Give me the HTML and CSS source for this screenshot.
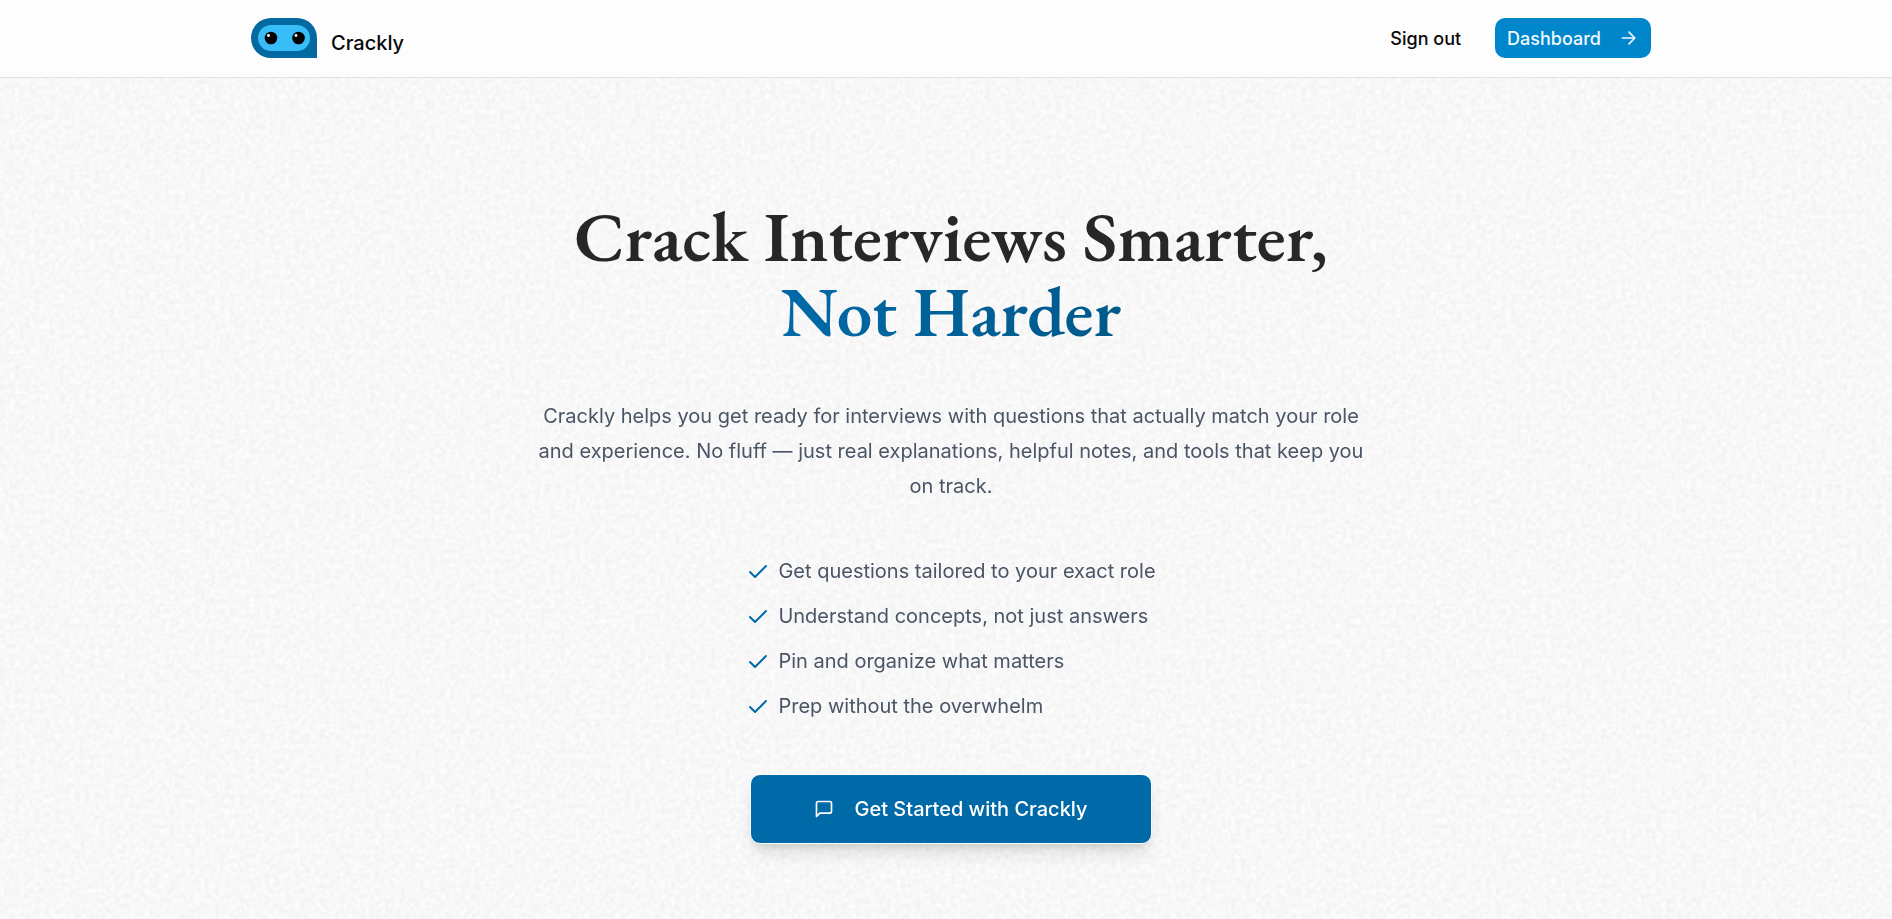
FILE: index.html
```html
<!DOCTYPE html>
<html lang="en">
<head>
<meta charset="utf-8">
<meta name="viewport" content="width=device-width, initial-scale=1">
<title>Crackly</title>
<link rel="stylesheet" href="styles.css">
</head>
<body>
<svg class="paper" aria-hidden="true">
  <filter id="grain" x="0" y="0" width="100%" height="100%" color-interpolation-filters="sRGB">
    <feTurbulence type="fractalNoise" baseFrequency="0.2" numOctaves="3" seed="4" stitchTiles="stitch"/>
    <feColorMatrix type="matrix" values="0.07 0 0 0 0.936  0.07 0 0 0 0.936  0.07 0 0 0 0.936  0 0 0 0 1"/>
  </filter>
  <rect width="100%" height="100%" filter="url(#grain)"/>
</svg>
<header class="header">
  <div class="bar">
    <a class="brand" href="#">
      <svg class="logo" viewBox="0 0 66 40" aria-hidden="true">
        <path d="M20 0h26a20 20 0 0 1 20 20v20H20a20 20 0 0 1 0-40z" fill="#0369a1"/>
        <rect x="7" y="7" width="52" height="26" rx="13" fill="#38bdf8"/>
        <circle cx="20" cy="20" r="6.3"/><circle cx="47.5" cy="20" r="6.3"/>
        <circle cx="17.5" cy="17.5" r="1.4" fill="#fff"/><circle cx="45" cy="17.5" r="1.4" fill="#fff"/>
      </svg>
      <span class="name">Crackly</span>
    </a>
    <nav class="nav">
      <button class="signout" type="button">Sign out</button>
      <a class="dashboard" href="#">Dashboard
        <svg class="icon" viewBox="0 0 24 24" aria-hidden="true"><path d="M4 12h15M12 5l7 7-7 7"/></svg>
      </a>
    </nav>
  </div>
</header>
<main class="hero">
  <h1 class="title">Crack Interviews Smarter,<br><span class="accent">Not Harder</span></h1>
  <p class="lead">Crackly helps you get ready for interviews with questions that actually match your role and experience. No fluff — just real explanations, helpful notes, and tools that keep you on track.</p>
  <ul class="features">
    <li class="feature"><svg class="check" viewBox="0 0 24 24" aria-hidden="true"><path d="M20 6 9 17l-5-5"/></svg>Get questions tailored to your exact role</li>
    <li class="feature"><svg class="check" viewBox="0 0 24 24" aria-hidden="true"><path d="M20 6 9 17l-5-5"/></svg>Understand concepts, not just answers</li>
    <li class="feature"><svg class="check" viewBox="0 0 24 24" aria-hidden="true"><path d="M20 6 9 17l-5-5"/></svg>Pin and organize what matters</li>
    <li class="feature"><svg class="check" viewBox="0 0 24 24" aria-hidden="true"><path d="M20 6 9 17l-5-5"/></svg>Prep without the overwhelm</li>
  </ul>
  <a class="cta" href="#">
    <svg class="icon" viewBox="0 0 24 24" aria-hidden="true"><path d="M21 15a2 2 0 0 1-2 2H7l-4 4V5a2 2 0 0 1 2-2h14a2 2 0 0 1 2 2z"/></svg>
    Get Started with Crackly
  </a>
</main>
</body>
</html>
```
FILE: styles.css
```css
* { box-sizing: border-box; }

body {
  margin: 0;
  min-height: 100vh;
  background: #f7f7f7;
  color: #09090b;
  font-family: Inter, "Liberation Sans", sans-serif;
  font-size: 20px;
  font-optical-sizing: none;
  overflow: hidden;
}

a { color: inherit; text-decoration: none; }

.paper {
  position: fixed;
  inset: 0;
  width: 100%;
  height: 100%;
  z-index: -1;
}

.header {
  background: #fdfdfd;
  border-bottom: 1px solid #e2e2e3;
  padding: 18px 0 19px 10px;
}

.bar, .brand, .nav, .dashboard, .feature, .cta {
  display: flex;
  align-items: center;
}

.bar {
  justify-content: space-between;
  max-width: 1400px;
  margin: 0 auto;
}

.brand { gap: 14px; }
.logo { width: 66px; height: 40px; }
.name { font-weight: 500; line-height: 28px; padding-top: 10px; }

.nav { gap: 34px; }

.signout {
  border: 0;
  padding: 2px 0 0;
  background: none;
  color: inherit;
  font: 500 18px/28px Inter, sans-serif;
}

.dashboard {
  height: 40px;
  padding: 0 12px;
  gap: 18px;
  border-radius: 10px;
  background: #0086cb;
  color: #f0f9ff;
  font-size: 18px;
  font-weight: 500;
}

.icon, .check {
  flex: none;
  fill: none;
  stroke: currentColor;
  stroke-width: 2;
  stroke-linecap: round;
  stroke-linejoin: round;
}

.icon { width: 20px; height: 20px; }
.check { width: 24px; height: 24px; color: #0069a8; }

.hero {
  display: flex;
  flex-direction: column;
  align-items: center;
  padding: 121px 0 0 10px;
  text-align: center;
}

.title {
  margin: 0;
  color: #27272a;
  font-family: "EB Garamond", "Liberation Serif", serif;
  font-size: 71px;
  font-weight: 600;
  line-height: 75px;
}

.accent {
  background: linear-gradient(to right, #0069a8, #00598a);
  background-clip: text;
  -webkit-background-clip: text;
  color: transparent;
}

.lead {
  max-width: 840px;
  margin: 50px 0 0;
  color: #4a5565;
  line-height: 35px;
}

.features {
  display: grid;
  gap: 10px;
  margin: 50px 0 0;
  padding: 0;
  list-style: none;
  color: #4a5565;
  line-height: 35px;
}

.feature { gap: 8px; }

.cta {
  height: 70px;
  margin-top: 50px;
  padding: 0 63px;
  gap: 20px;
  border: 1px solid #fff;
  border-radius: 10px;
  background: #0069a8;
  color: #fff;
  font-weight: 500;
  box-shadow: 0 12px 18px -4px rgb(0 0 0 / 12%), 0 5px 8px -4px rgb(0 0 0 / 12%);
}
```
